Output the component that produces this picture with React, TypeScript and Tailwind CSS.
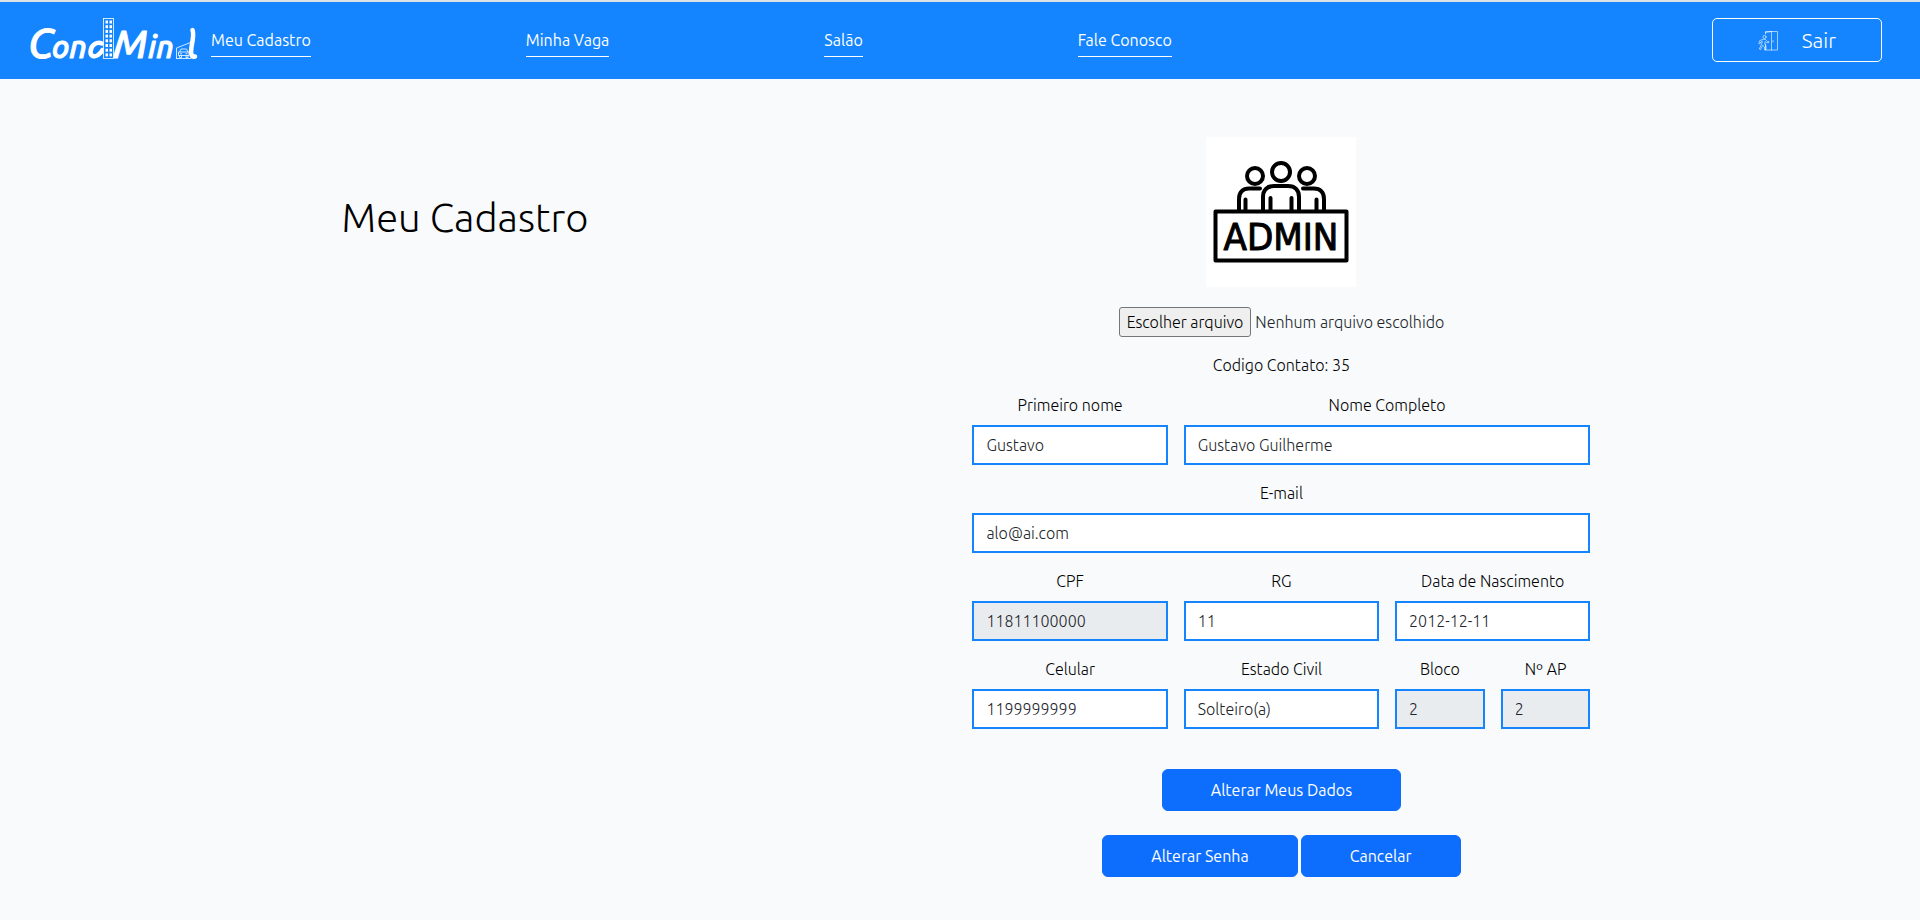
import React from "react";

const navItems = ["Meu Cadastro", "Minha Vaga", "Salão", "Fale Conosco"];

type FieldProps = {
  id: string;
  label: string;
  value: string;
  span: string;
  type?: string;
  disabled?: boolean;
};

const fields: FieldProps[] = [
  { id: "primeiro-nome", label: "Primeiro nome", value: "Gustavo", span: "col-span-4" },
  { id: "nome-completo", label: "Nome Completo", value: "Gustavo Guilherme", span: "col-span-8" },
  { id: "email", label: "E-mail", value: "alo@ai.com", span: "col-span-12", type: "email" },
  { id: "cpf", label: "CPF", value: "11811100000", span: "col-span-4", disabled: true },
  { id: "rg", label: "RG", value: "11", span: "col-span-4" },
  { id: "nascimento", label: "Data de Nascimento", value: "2012-12-11", span: "col-span-4" },
  { id: "celular", label: "Celular", value: "1199999999", span: "col-span-4", type: "tel" },
  { id: "estado-civil", label: "Estado Civil", value: "Solteiro(a)", span: "col-span-4" },
  { id: "bloco", label: "Bloco", value: "2", span: "col-span-2", disabled: true },
  { id: "ap", label: "Nº AP", value: "2", span: "col-span-2", disabled: true },
];

function Logo() {
  const floors = [0, 1, 2, 3, 4, 5, 6, 7];
  return (
    <svg width="168" height="44" viewBox="0 0 168 44" role="img" aria-label="CondMind" fill="#fff" className="overflow-visible">
      <g fontFamily="Ubuntu, Lato, sans-serif" fontWeight="500" fontStyle="italic" stroke="#fff" strokeWidth="1" strokeLinejoin="round">
        <text x="-2" y="40" fontSize="41">C</text>
        <text x="22" y="40" fontSize="31">on</text>
        <text x="83" y="40" fontSize="40">M</text>
        <text x="118" y="40" fontSize="31">in</text>
      </g>
      {/* Tower and bowl of the first "d" */}
      <path d="M72 25.500c-5-2-11 1-11.500 8-.2 5 4 6 7.500 3.500 2-1.400 3.500-3 4.500-5" fill="none" stroke="#fff" strokeWidth="4.500" strokeLinecap="round" />
      <rect x="73.500" y="0.500" width="10" height="40" fill="#1485ff" stroke="#fff" strokeWidth="0.800" />
      {floors.map((n) => (
        <g key={n}>
          <rect x="75.500" y={2.5 + n * 4.7} width="2.500" height="3" />
          <rect x="79.500" y={2.5 + n * 4.7} width="2.500" height="3" />
        </g>
      ))}
      {/* Garage and stem of the last "d" */}
      <path d="M162.500 12c1.500 4 .5 9-.5 14s-1 10 0 12c.5 1 1.500 1 3 .5" fill="none" stroke="#fff" strokeWidth="4.500" strokeLinecap="round" strokeLinejoin="round" />
      <g fill="none" stroke="#fff" strokeWidth="0.800">
        <path d="M146.500 40.500V30L160.500 24.500M146 40.500h15" />
        <path d="M149.500 34l1.500-3h5.500l1.500 3M148.500 34h10.500v3.500H148.500zM149.500 37.500v2h2v-2M156 37.500v2h2v-2M150 35.800h2M155.500 35.800h2" />
      </g>
    </svg>
  );
}

function ExitIcon() {
  return (
    <svg width="20" height="21" viewBox="0 0 20 21" fill="none" stroke="#fff" strokeOpacity="0.85" strokeWidth="0.7" strokeLinejoin="round" strokeLinecap="round" aria-hidden="true">
      <path d="M7.500 4V1.500h12v18.500H8.500M13.500 1.500V20M13.500 1.500l-6 1M7.500 14v6M15 10.500v1.500" />
      <circle cx="6.500" cy="7" r="1.600" />
      <path d="M5 9.500L1.800 10.500.8 13.500l1 .4 1-2 1.500-.5-1 3.500-2 4 1.200.8 2.200-4.300 1.800 1.500v3H8v-4L6.600 13.500l.7-2 1.500 1.200h2v-1.200H9.500L7.500 9.500z" />
    </svg>
  );
}

function AdminAvatar() {
  return (
    <svg width="150" height="150" viewBox="0 0 150 150" role="img" aria-label="Foto de perfil" className="bg-white">
      <g fill="none" stroke="#000" strokeWidth="4" strokeLinecap="round" strokeLinejoin="round">
        <circle cx="49" cy="39" r="8" />
        <circle cx="75" cy="35" r="9" />
        <circle cx="101" cy="39" r="8" />
        <path d="M57 74V60c0-7 4-11 11-11h14c7 0 11 4 11 11v14M64.500 74V61M85.500 74V61" />
        <path d="M33 74V62c0-7 4-10.500 10-10.500h11M39.500 74V62.500" />
        <path d="M118 74V62c0-7-4-10.500-10-10.500H97M110.500 74V62.500" />
        <rect x="9.500" y="74.500" width="131" height="49" />
      </g>
      <text x="75" y="113" textAnchor="middle" fontFamily="'DejaVu Sans Condensed', 'DejaVu Sans', sans-serif" fontSize="38" fontWeight="400" stroke="#000" strokeWidth="1" strokeLinejoin="round">
        ADMIN
      </text>
    </svg>
  );
}

function Field({ id, label, value, span, type = "text", disabled }: FieldProps) {
  return (
    <div className={`${span} flex min-w-0 flex-col gap-2`}>
      <label htmlFor={id} className="text-center">
        {label}
      </label>
      <input
        id={id}
        type={type}
        defaultValue={value}
        disabled={disabled}
        className="h-10 w-full border-2 border-[#1485ff] bg-white px-3 text-[#212529] disabled:bg-[#e9ecef]"
      />
    </div>
  );
}

function ActionButton({ children }: { children: React.ReactNode }) {
  return (
    <button type="button" className="rounded-md border border-[#0d6efd] bg-[#0d6efd] px-12 py-2 font-normal text-white">
      {children}
    </button>
  );
}

export default function App() {
  return (
    <div className="min-h-screen bg-[#f8fafc] font-['Ubuntu','Noto_Sans',sans-serif] text-base leading-6 font-light text-black">
      <header className="flex items-center justify-between border-t-2 border-[#dee2e6] bg-[#1485ff] pt-4 pr-[38px] pb-[17px] pl-[30px] text-white">
        <div className="flex items-center gap-[13px]">
          <a href="#inicio" aria-label="CondMind">
            <Logo />
          </a>
          <nav className="mt-1 flex gap-[215px] font-normal">
            {navItems.map((item) => (
              <a key={item} href="#" className="border-b border-white pb-1 whitespace-nowrap">
                {item}
              </a>
            ))}
          </nav>
        </div>
        <button type="button" className="flex h-11 items-center gap-6 rounded-[5px] border border-white px-[45px] text-[21px]">
          <ExitIcon />
          Sair
        </button>
      </header>

      <main className="flex items-start justify-center gap-96 pt-[58px] pb-8 pl-3">
        <h1 className="mt-14 text-[40px] leading-[50px] whitespace-nowrap">Meu Cadastro</h1>
        <form className="flex w-[618px] flex-col items-center gap-4">
          <AdminAvatar />
          <div className="relative mt-1 flex items-center gap-1">
            <label htmlFor="arquivo" className="rounded-[3px] border border-[#767676] bg-[#efefef] px-[7px] py-[2px]">
              Escolher arquivo
            </label>
            <input id="arquivo" type="file" className="sr-only" />
            <span className="text-[#212529]">Nenhum arquivo escolhido</span>
          </div>
          <p>Codigo Contato: 35</p>
          <div className="grid w-full grid-cols-12 gap-4">
            {fields.map((field) => (
              <Field key={field.id} {...field} />
            ))}
          </div>
          <div className="mt-6 flex flex-col items-center gap-6">
            <ActionButton>Alterar Meus Dados</ActionButton>
            <div className="flex gap-[3px]">
              <ActionButton>Alterar Senha</ActionButton>
              <ActionButton>Cancelar</ActionButton>
            </div>
          </div>
        </form>
      </main>
    </div>
  );
}
